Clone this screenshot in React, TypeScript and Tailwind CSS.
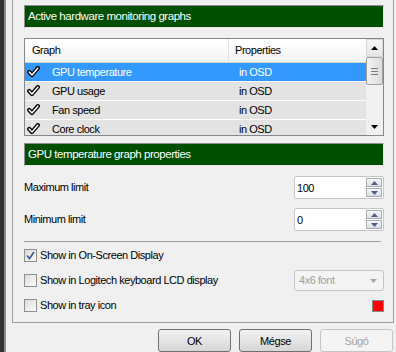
const rows = [
  { name: "GPU temperature", prop: "in OSD", selected: true },
  { name: "GPU usage", prop: "in OSD" },
  { name: "Fan speed", prop: "in OSD" },
  { name: "Core clock", prop: "in OSD" },
];

function CheckGlyph() {
  return (
    <svg width="13" height="12" viewBox="0 0 13 12" className="shrink-0">
      <path d="M2.2 6 L5 9 L10.8 2.2" fill="none" stroke="#000" strokeWidth="4.2" strokeLinecap="round" strokeLinejoin="round" />
      <path d="M2.2 6 L5 9 L10.8 2.2" fill="none" stroke="#fff" strokeWidth="1.6" strokeLinecap="round" strokeLinejoin="round" />
    </svg>
  );
}

function Arrow({ dir, color = "#000" }: { dir: "up" | "down"; color?: string }) {
  return (
    <svg width="7" height="4" viewBox="0 0 7 4">
      {dir === "up" ? <path d="M0 4 L3.5 0 L7 4 Z" fill={color} /> : <path d="M0 0 L7 0 L3.5 4 Z" fill={color} />}
    </svg>
  );
}

function GreenHeader({ title }: { title: string }) {
  return (
    <div className="flex h-[23px] items-center border border-[#8f8f8f] border-b-[#e8e8e8] border-r-[#e8e8e8] bg-[#004f00] pl-[3px] text-[11.5px] text-white">
      {title}
    </div>
  );
}

function SpinBox({ value }: { value: string }) {
  return (
    <div className="flex h-[23px] w-[90px] rounded-[2px] border border-[#c4c6cb] bg-white">
      <div className="flex-1 pl-[2px] pt-[3px]">{value}</div>
      <div className="flex w-[17px] flex-col gap-px py-px pr-px">
        <div className="flex flex-1 items-center justify-center border border-[#a7acb5] bg-gradient-to-b from-[#f7f7f7] to-[#dcdfe4]">
          <Arrow dir="up" color="#4d6185" />
        </div>
        <div className="flex flex-1 items-center justify-center border border-[#a7acb5] bg-gradient-to-b from-[#f7f7f7] to-[#dcdfe4]">
          <Arrow dir="down" color="#4d6185" />
        </div>
      </div>
    </div>
  );
}

function CheckBox({ checked }: { checked?: boolean }) {
  return (
    <div className="flex h-[13px] w-[13px] shrink-0 items-center justify-center border border-[#8e8f8f] bg-gradient-to-br from-[#dcdcdc] to-[#fbfbfb]">
      {checked && (
        <svg width="9" height="9" viewBox="0 0 9 9">
          <path d="M1 4.5 L3.5 7.5 L8 1" fill="none" stroke="#4a5f97" strokeWidth="1.8" />
        </svg>
      )}
    </div>
  );
}

function Button({ label, disabled }: { label: string; disabled?: boolean }) {
  return (
    <div
      className={
        disabled
          ? "flex h-[23px] w-[73px] items-start justify-center rounded-[3px] border border-[#c3c6c9] bg-[#f4f4f4] pt-[3px] text-[#a3a3a3]"
          : "flex h-[23px] w-[73px] items-start justify-center rounded-[3px] border border-[#707070] bg-gradient-to-b from-[#f2f2f2] to-[#d6d6d6] pt-[3px]"
      }
    >
      {label}
    </div>
  );
}

export default function App() {
  return (
    <div
      className="flex h-[352px] w-[396px] overflow-hidden bg-[#f0f0f0] text-[11px] tracking-[-0.45px] text-black"
      style={{ fontFamily: '"Liberation Sans", Arial, sans-serif' }}
    >
      {/* left desktop edge */}
      <div className="h-full w-[4px] bg-[#333333]" />
      <div className="h-full w-[2px] bg-[#8c8c8c]" />

      <div className="flex flex-col">
        {/* group box */}
        <div className="ml-[6px] h-[327px] w-[382px] border-x border-b border-[#a0a0a0] pl-[11px] pr-[9px]">
          <div className="mt-[5px]">
            <GreenHeader title="Active hardware monitoring graphs" />
          </div>

          {/* list */}
          <div className="mt-[10px] flex h-[98px] border border-[#828790] bg-white">
            <div className="flex flex-1 flex-col overflow-hidden">
              <div className="flex h-[24px] shrink-0 border-b border-[#d5d5d5] bg-gradient-to-b from-white to-[#f3f4f6]">
                <div className="flex w-[204px] items-center border-r border-[#e0e2e6] pl-[7px]">Graph</div>
                <div className="flex items-center pl-[6px]">Properties</div>
              </div>
              {rows.map((r) => (
                <div
                  key={r.name}
                  className={
                    r.selected
                      ? "flex h-[19px] shrink-0 items-center border-b border-white bg-[#3399ff] text-white"
                      : "flex h-[19px] shrink-0 items-center border-b border-white bg-[#e3e3e3]"
                  }
                >
                  <div className="flex w-[214px] items-center pl-[2px]">
                    <CheckGlyph />
                    <span className="ml-[12px]">{r.name}</span>
                  </div>
                  <span>{r.prop}</span>
                </div>
              ))}
            </div>
            {/* scrollbar */}
            <div className="flex w-[17px] flex-col bg-[#f0f0f0]">
              <div className="flex h-[18px] items-center justify-center border border-[#d8d8d8] bg-gradient-to-b from-[#f6f6f6] to-[#e6e6e6]">
                <Arrow dir="up" />
              </div>
              <div className="flex h-[28px] flex-col items-center justify-center gap-[2px] rounded-[2px] border border-[#a0a0a0] bg-gradient-to-r from-[#f3f3f3] to-[#dcdcdc]">
                <div className="h-px w-[7px] bg-[#777]" />
                <div className="h-px w-[7px] bg-[#777]" />
                <div className="h-px w-[7px] bg-[#777]" />
              </div>
              <div className="flex-1" />
              <div className="flex h-[17px] items-center justify-center">
                <Arrow dir="down" />
              </div>
            </div>
          </div>

          <div className="mt-[7px]">
            <GreenHeader title="GPU temperature graph properties" />
          </div>

          <div className="mt-[10px] flex items-center justify-between">
            <span>Maximum limit</span>
            <SpinBox value="100" />
          </div>
          <div className="mt-[9px] flex items-center justify-between">
            <span>Minimum limit</span>
            <SpinBox value="0" />
          </div>

          <div className="mt-[10px] mr-[3px] h-px bg-[#a0a0a0]" />

          <div className="mt-[7px] flex h-[13px] items-center gap-[3px]">
            <CheckBox checked />
            <span>Show in On-Screen Display</span>
          </div>
          <div className="mt-[10px] flex h-[17px] items-center justify-between">
            <div className="flex items-center gap-[3px]">
              <CheckBox />
              <span>Show in Logitech keyboard LCD display</span>
            </div>
            <div className="flex h-[21px] w-[90px] items-center justify-between rounded-[3px] border border-[#c6c6c6] bg-[#f4f4f4] pl-[4px] pr-[6px] text-[#a0a0a0]">
              <span>4x6 font</span>
              <Arrow dir="down" color="#a8a8a8" />
            </div>
          </div>
          <div className="mt-[10px] flex h-[13px] items-center justify-between">
            <div className="flex items-center gap-[3px]">
              <CheckBox />
              <span>Show in tray icon</span>
            </div>
            <div className="h-[12px] w-[12px] border border-[#8a8a8a] bg-[#ff0000]" />
          </div>
        </div>

        {/* dialog buttons */}
        <div className="mt-[6px] flex justify-end gap-[8px] pr-[1px]">
          <Button label="OK" />
          <Button label="Mégse" />
          <Button label="Súgó" disabled />
        </div>
      </div>
    </div>
  );
}
